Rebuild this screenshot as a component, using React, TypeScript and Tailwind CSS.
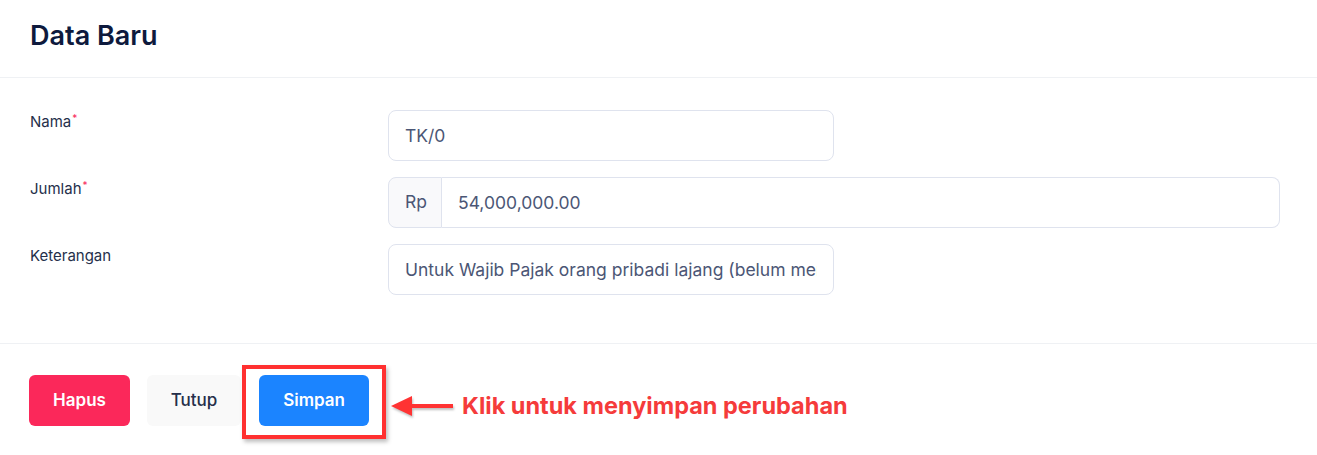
import React from 'react';

const inputCls =
  'h-[51px] w-full rounded-lg border border-[#dfe3ee] bg-white px-4 text-[17.5px] text-[#4b5675] outline-none';

function Label({ text, required }: { text: string; required?: boolean }) {
  return (
    <label className="mt-[2px] text-[15px] leading-5 text-[#252f4a]">
      {text}
      {required && <sup className="ml-[1px] text-[10px] text-[#f8285a]">*</sup>}
    </label>
  );
}

export default function App() {
  return (
    <div className="min-h-[455px] bg-white font-['Inter',sans-serif]">
      {/* Header */}
      <div className="h-[78px] border-b border-[#eff1f4] px-[30px] pt-[18px]">
        <h2 className="text-[27px] font-semibold leading-9 text-[#0e1a3d]">Data Baru</h2>
      </div>

      {/* Body */}
      <div className="py-8 pl-[30px] pr-[37px]">
        <div className="mb-4 grid grid-cols-[358px_1fr]">
          <Label text="Nama" required />
          <div className="w-1/2">
            <input className={inputCls} defaultValue="TK/0" />
          </div>
        </div>

        <div className="mb-4 grid grid-cols-[358px_1fr]">
          <Label text="Jumlah" required />
          <div className="flex h-[51px]">
            <span className="flex w-[54px] items-center rounded-l-lg border border-[#dfe3ee] bg-[#f9f9fb] pl-4 text-[17.5px] text-[#4b5675]">
              Rp
            </span>
            <input
              className="h-full flex-1 rounded-r-lg border border-l-0 border-[#dfe3ee] bg-white px-4 text-[17.5px] text-[#4b5675] outline-none"
              defaultValue="54,000,000.00"
            />
          </div>
        </div>

        <div className="mb-4 grid grid-cols-[358px_1fr]">
          <Label text="Keterangan" />
          <div className="w-1/2">
            <input
              className={inputCls}
              defaultValue="Untuk Wajib Pajak orang pribadi lajang (belum menikah) tanpa tanggungan"
            />
          </div>
        </div>
      </div>

      {/* Footer */}
      <div className="flex items-center border-t border-[#eff1f4] px-[29px] pt-[31px]">
        <button className="h-[51px] w-[101px] rounded-md bg-[#fb285a] text-[17px] font-semibold text-white">
          Hapus
        </button>
        <button className="ml-[17px] h-[51px] w-[94px] rounded-md bg-[#f9f9f9] text-[17px] font-medium text-[#252f4a]">
          Tutup
        </button>
        <div className="relative ml-[18px]">
          <button className="h-[51px] w-[110px] rounded-md bg-[#1b84ff] text-[17px] font-semibold text-white">
            Simpan
          </button>
          {/* annotation */}
          <div className="pointer-events-none absolute left-[-17px] top-[-10px] h-[74px] w-[144px] border-[4px] border-[#ff3030] shadow-[2px_3px_4px_rgba(0,0,0,0.25)]" />
          <div className="pointer-events-none absolute left-[132px] top-[13px] flex items-center whitespace-nowrap">
            <svg width="66" height="24" viewBox="0 0 66 24" className="drop-shadow-[1px_2px_1px_rgba(0,0,0,0.25)]">
              <path d="M0 12 L21 2 L21 22 Z" fill="#ff3333" />
              <rect x="20" y="10" width="42" height="4" fill="#ff3333" />
            </svg>
            <span className="ml-[5px] text-[23.5px] font-bold text-[#f53b3b]">Klik untuk menyimpan perubahan</span>
          </div>
        </div>
      </div>
    </div>
  );
}
